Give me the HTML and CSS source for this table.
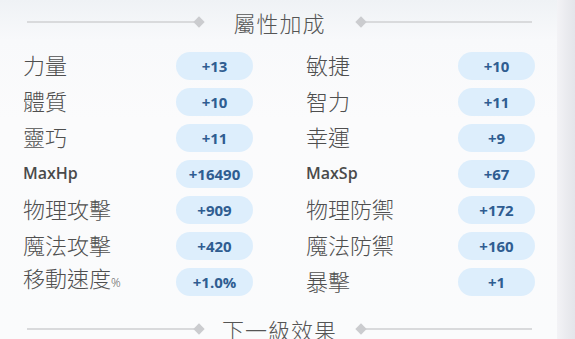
FILE: index.html
```html
<!DOCTYPE html>
<html lang="zh-Hant">
<head>
<meta charset="utf-8">
<title>屬性加成</title>
<link rel="stylesheet" href="styles.css">
</head>
<body>
<div class="screen">
  <main class="panel">
    <div class="section-head head-top">
      <span class="line"></span><span class="diamond"></span>
      <span class="title">屬性加成</span>
      <span class="diamond"></span><span class="line"></span>
    </div>
    <div class="stats">
      <span class="label">力量</span><span class="pill">+13</span><span></span>
      <span class="label">敏捷</span><span class="pill">+10</span>

      <span class="label">體質</span><span class="pill">+10</span><span></span>
      <span class="label">智力</span><span class="pill">+11</span>

      <span class="label">靈巧</span><span class="pill">+11</span><span></span>
      <span class="label">幸運</span><span class="pill">+9</span>

      <span class="label latin">MaxHp</span><span class="pill">+16490</span><span></span>
      <span class="label latin">MaxSp</span><span class="pill">+67</span>

      <span class="label">物理攻擊</span><span class="pill">+909</span><span></span>
      <span class="label">物理防禦</span><span class="pill">+172</span>

      <span class="label">魔法攻擊</span><span class="pill">+420</span><span></span>
      <span class="label">魔法防禦</span><span class="pill">+160</span>

      <span class="label">移動速度<small class="pct">%</small></span><span class="pill">+1.0%</span><span></span>
      <span class="label">暴擊</span><span class="pill">+1</span>
    </div>
    <div class="section-head head-bottom">
      <span class="line"></span><span class="diamond"></span>
      <span class="title">下一級效果</span>
      <span class="diamond"></span><span class="line"></span>
    </div>
  </main>
  <div class="edge"></div>
</div>
</body>
</html>
```

FILE: styles.css
```css
html, body {
  margin: 0;
  padding: 0;
}
body {
  width: 575px;
  height: 339px;
  overflow: hidden;
  background: #fafbfc;
  font-family: "Noto Sans CJK TC", "Noto Sans", sans-serif;
}
.screen {
  display: flex;
  height: 339px;
}
.panel {
  width: 557px;
  flex: none;
  background: linear-gradient(180deg, #eff2f5 0px, #f8f9fb 40px, #fbfbfc 120px, #fafbfc 339px);
}
.edge {
  flex: 1;
  background: linear-gradient(90deg, #f3f3f6 0%, #e9eaee 60%, #e4e5ea 100%);
}
.section-head {
  display: flex;
  align-items: center;
  padding: 0 25px 0 27px;
}
.head-top {
  height: 44px;
}
.head-bottom {
  height: 39px;
  margin-top: 9px;
}
.line {
  flex: 1;
  height: 2px;
  background: #d9dadc;
}
.diamond {
  width: 8px;
  height: 8px;
  background: #cbcccf;
  transform: rotate(45deg);
  flex: none;
  margin: 0 -1px;
}
.title {
  width: 156px;
  flex: none;
  text-align: center;
  font-size: 22px;
  font-weight: 300;
  line-height: 30px;
  color: #555555;
  letter-spacing: 1px;
}
.stats {
  display: grid;
  grid-template-columns: 153px 77px 53px 152px 77px;
  grid-auto-rows: 36px;
  align-items: center;
  padding-left: 23px;
  margin-top: 4px;
}
.label {
  font-size: 22px;
  font-weight: 300;
  line-height: 30px;
  color: #4f4f4f;
  margin-top: -4px;
  white-space: nowrap;
}
.label.latin {
  font-family: "Open Sans", sans-serif;
  font-weight: 600;
  font-size: 16px;
  color: #4a4a4a;
  margin-top: -2px;
}
.pct {
  font-size: 12px;
  font-family: "Open Sans", sans-serif;
}
.pill {
  height: 28px;
  border-radius: 14px;
  background: #ddeefc;
  color: #2f5d91;
  font-family: "Open Sans", sans-serif;
  font-weight: 700;
  font-size: 15px;
  display: flex;
  align-items: center;
  justify-content: center;
}
```
